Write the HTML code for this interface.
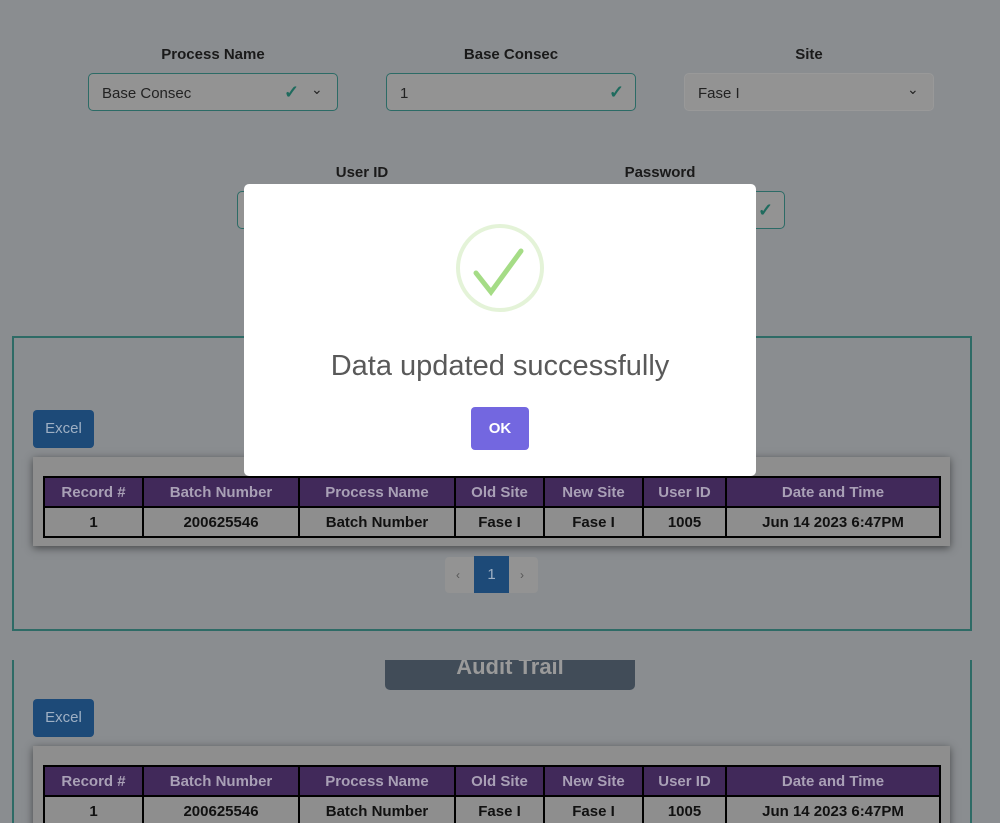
<!DOCTYPE html>
<html style="width:1000px;height:823px;overflow:hidden"><head><meta charset="utf-8"><style>
*{box-sizing:border-box;margin:0;padding:0}
body{width:1000px;height:823px;overflow:hidden;background:#8a8d90;font-family:"Liberation Sans",sans-serif;position:relative}
.a{position:absolute}
.lbl{font-weight:bold;font-size:15px;color:#1a1a1a;text-align:center;width:250px}
.inp{height:38px;width:250px;border:1px solid #2c6b66;border-radius:5px;background:#939393;font-size:15px;color:#222;padding:11px 13px}
.inp.g{border-color:#999}
.ck{position:absolute;top:8px;color:#1f6b5e;font-size:18px;font-weight:bold}
.dd{position:absolute;top:7px;font-size:14px;color:#222}
.xl{width:61px;height:38px;background:#1d4a78;border-radius:4px;color:#9fb0c4;font-size:15px;text-align:center;line-height:38px}
.wrap{left:33px;width:917px;background:#8e8e8e;box-shadow:0 2px 8px rgba(0,0,0,.5)}
table{position:absolute;left:10px;top:19px;width:898px;border-collapse:collapse;font-size:15px;font-weight:bold;text-align:center}
th{background:#41295a;color:#a9a0b6;height:30px;border:2px solid #000}
td{color:#111;height:30px;border:2px solid #000}
</style></head><body>
<div class="a lbl" style="left:88px;top:46px">Process Name</div>
<div class="a lbl" style="left:386px;top:46px">Base Consec</div>
<div class="a lbl" style="left:684px;top:46px">Site</div>
<div class="a inp" style="left:88px;top:73px">Base Consec<span class="ck" style="left:195px">✓</span><span class="dd" style="left:222px">⌄</span></div>
<div class="a inp" style="left:386px;top:73px">1<span class="ck" style="left:222px">✓</span></div>
<div class="a inp g" style="left:684px;top:73px">Fase I<span class="dd" style="left:222px">⌄</span></div>
<div class="a lbl" style="left:237px;top:164px">User ID</div>
<div class="a lbl" style="left:535px;top:164px">Password</div>
<div class="a inp" style="left:237px;top:191px"></div>
<div class="a inp" style="left:535px;top:191px"><span class="ck" style="left:222px">✓</span></div>

<div class="a" style="left:12px;top:336px;width:960px;height:295px;border:2px solid #2e6b66"></div>
<div class="a xl" style="left:33px;top:410px">Excel</div>
<div class="a wrap" style="top:457px;height:89px"><table><tr><th style="width:99px">Record #</th><th style="width:156px">Batch Number</th><th style="width:156px">Process Name</th><th style="width:89px">Old Site</th><th style="width:99px">New Site</th><th style="width:83px">User ID</th><th>Date and Time</th></tr><tr><td>1</td><td>200625546</td><td>Batch Number</td><td>Fase I</td><td>Fase I</td><td>1005</td><td>Jun 14 2023 6:47PM</td></tr></table></div>
<div class="a" style="left:445px;top:557px;width:93px;height:36px;background:#939393;border-radius:4px"></div>
<div class="a" style="left:474px;top:556px;width:35px;height:37px;background:#1d4a78;color:#9fb0c4;font-size:15px;text-align:center;line-height:37px">1</div>
<div class="a" style="left:456px;top:568px;font-size:12px;color:#555">‹</div>
<div class="a" style="left:520px;top:568px;font-size:12px;color:#555">›</div>

<div class="a" style="left:12px;top:660px;width:960px;height:200px;border-left:2px solid #2e6b66;border-right:2px solid #2e6b66"></div>
<div class="a" style="left:385px;top:660px;width:250px;height:30px;background:#414c58;border-radius:0 0 5px 5px;overflow:hidden"><div style="position:absolute;top:-6px;width:100%;text-align:center;color:#9a9a9a;font-size:22px;font-weight:bold">Audit Trail</div></div>
<div class="a xl" style="left:33px;top:699px">Excel</div>
<div class="a wrap" style="top:746px;height:89px"><table><tr><th style="width:99px">Record #</th><th style="width:156px">Batch Number</th><th style="width:156px">Process Name</th><th style="width:89px">Old Site</th><th style="width:99px">New Site</th><th style="width:83px">User ID</th><th>Date and Time</th></tr><tr><td>1</td><td>200625546</td><td>Batch Number</td><td>Fase I</td><td>Fase I</td><td>1005</td><td>Jun 14 2023 6:47PM</td></tr></table></div>

<div class="a" style="left:244px;top:184px;width:512px;height:292px;background:#fff;border-radius:5px">
<svg class="a" style="left:211px;top:39px" width="90" height="90" viewBox="0 0 90 90"><circle cx="45" cy="45" r="42" fill="none" stroke="#e4f3d8" stroke-width="4"/><path d="M21 50 L36 69 L66 28" fill="none" stroke="#a5dc86" stroke-width="5" stroke-linecap="round"/></svg>
<div class="a" style="left:0;top:166px;width:512px;text-align:center;font-size:29px;color:#595959">Data updated successfully</div>
<div class="a" style="left:227px;top:223px;width:58px;height:43px;background:#7367e0;border-radius:4px;color:#fff;font-weight:bold;font-size:15px;text-align:center;line-height:43px">OK</div>
</div>
</body></html>
